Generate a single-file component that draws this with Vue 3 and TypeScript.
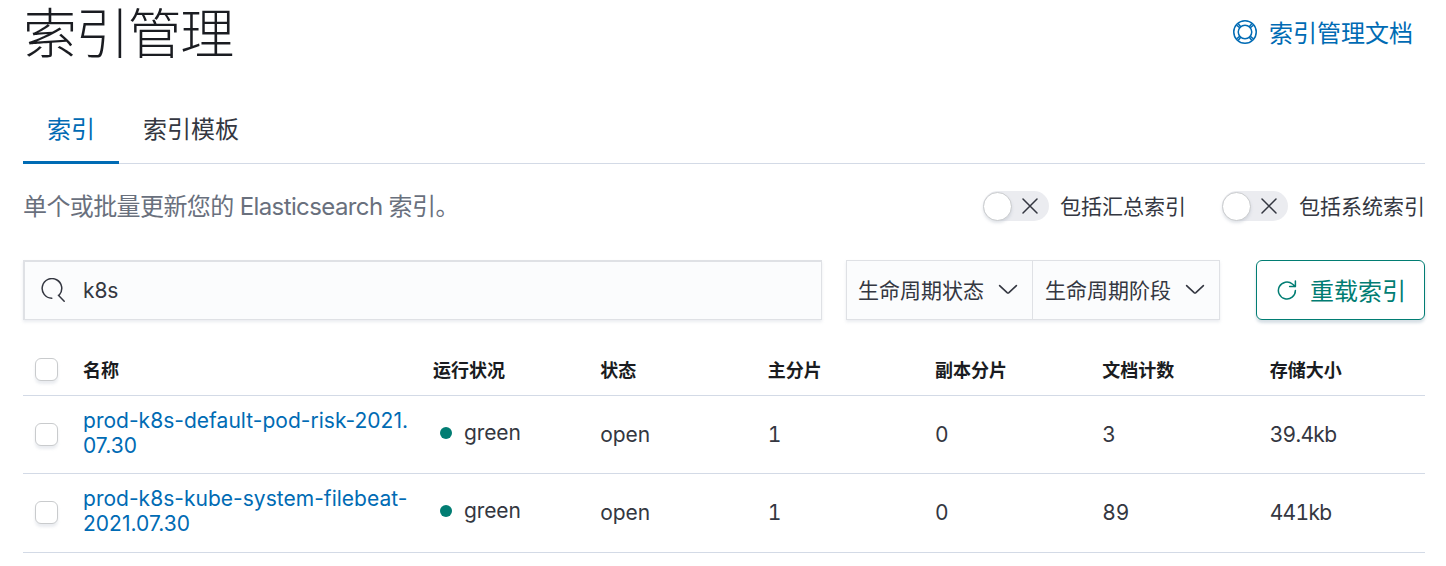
<script setup lang="ts">
import { ref } from 'vue'

interface IndexRow {
  name: string[]
  health: string
  status: string
  primary: number
  replica: number
  docs: number
  size: string
}

const query = ref('k8s')
const tabs = ['索引', '索引模板']
const toggles = ['包括汇总索引', '包括系统索引']
const filters = ['生命周期状态', '生命周期阶段']
const headers = ['运行状况', '状态', '主分片', '副本分片', '文档计数', '存储大小']
const rows: IndexRow[] = [
  { name: ['prod-k8s-default-pod-risk-2021.', '07.30'], health: 'green', status: 'open', primary: 1, replica: 0, docs: 3, size: '39.4kb' },
  { name: ['prod-k8s-kube-system-filebeat-', '2021.07.30'], health: 'green', status: 'open', primary: 1, replica: 0, docs: 89, size: '441kb' },
]
</script>

<template>
  <main class="page">
    <header class="page-header">
      <h1>索引管理</h1>
      <a class="docs-link">
        <svg class="help-icon" width="24" height="24" viewBox="0 0 16 16" fill="none" stroke="currentColor">
          <circle cx="8" cy="8" r="7.5" />
          <circle cx="8" cy="8" r="4.5" />
          <path d="M2.5 3.5 4.6 5.3M3.5 2.5 5.3 4.6M13.5 3.5 11.4 5.3M12.5 2.5 10.7 4.6M2.5 12.5 4.6 10.7M3.5 13.5 5.3 11.4M13.5 12.5 11.4 10.7M12.5 13.5 10.7 11.4" />
        </svg>
        <span>索引管理文档</span>
      </a>
    </header>

    <nav class="tabs">
      <a v-for="(tab, i) in tabs" :key="tab" class="tab" :class="{ selected: i === 0 }">{{ tab }}</a>
    </nav>

    <section class="intro">
      <p><span class="han">单个或批量更新您的</span> <span class="latin">Elasticsearch</span> <span class="han">索引。</span></p>
      <div class="toggles">
        <label v-for="label in toggles" :key="label" class="toggle">
          <span class="track">
            <span class="thumb"></span>
            <svg width="16" height="16" viewBox="0 0 16 16" fill="none" stroke="#343741" stroke-width="1.5" stroke-linecap="round">
              <path d="M1 1 15 15M15 1 1 15" />
            </svg>
          </span>
          <span class="toggle-label">{{ label }}</span>
        </label>
      </div>
    </section>

    <section class="controls">
      <div class="search">
        <svg width="24" height="24" viewBox="0 0 24 24" fill="none" stroke="#343741" stroke-width="1.5" stroke-linecap="round">
          <path d="M10.8 20.2A9.8 9.8 0 1 1 18.3 16.9M17.4 17.3 23.2 23.2" />
        </svg>
        <input v-model="query" type="text" />
      </div>
      <div class="filters">
        <button v-for="filter in filters" :key="filter" class="filter">
          <span>{{ filter }}</span>
          <svg width="20" height="12" viewBox="0 0 20 12" fill="none" stroke="#343741" stroke-width="1.6" stroke-linecap="round" stroke-linejoin="round">
            <path d="M1.6 1.6 9.1 8.6Q10 9.4 10.9 8.6L18.4 1.6" />
          </svg>
        </button>
      </div>
      <button class="reload">
        <svg width="20" height="20" viewBox="0 0 20 20" fill="none" stroke="currentColor" stroke-width="1.5" stroke-linecap="round" stroke-linejoin="round">
          <path d="M18.4 10.5A8.5 8.5 0 1 1 15.4 4Q17 5.2 18 6.6M18.4 1V6.6H12.6" />
        </svg>
        <span>重载索引</span>
      </button>
    </section>

    <table class="indices">
      <colgroup>
        <col class="col-check" />
        <col class="col-name" />
        <col v-for="header in headers" :key="header" />
      </colgroup>
      <thead>
        <tr>
          <th><span class="checkbox"></span></th>
          <th>名称</th>
          <th v-for="header in headers" :key="header">{{ header }}</th>
        </tr>
      </thead>
      <tbody>
        <tr v-for="row in rows" :key="row.name[0]">
          <td><span class="checkbox"></span></td>
          <td><a class="name"><span v-for="line in row.name" :key="line">{{ line }}</span></a></td>
          <td><span class="health"><i class="dot"></i>{{ row.health }}</span></td>
          <td>{{ row.status }}</td>
          <td>{{ row.primary }}</td>
          <td>{{ row.replica }}</td>
          <td>{{ row.docs }}</td>
          <td class="size">{{ row.size }}</td>
        </tr>
      </tbody>
    </table>
  </main>
</template>

<style>
body {
  background: #fff;
  overflow: hidden;
}
</style>

<style scoped>
.page {
  box-sizing: border-box;
  height: 566px;
  padding: 0 21px 0 23px;
  color: #343741;
  font-family: Inter, "Noto Sans CJK SC", sans-serif;
  font-size: 21px;
  letter-spacing: -0.005em;
}
.page-header {
  display: flex;
  justify-content: space-between;
  align-items: flex-start;
  height: 94px;
}
h1 {
  margin: 0;
  color: #1a1c21;
  font-size: 54px;
  font-weight: 300;
  line-height: 70px;
  letter-spacing: -0.03em;
}
.docs-link {
  display: flex;
  align-items: center;
  gap: 12px;
  height: 64px;
  margin-right: 12px;
  color: #006bb4;
  font-size: 24px;
  letter-spacing: 0;
}
.docs-link span {
  padding-bottom: 2px;
}
.help-icon {
  stroke-width: 1;
}
.tabs {
  display: flex;
  height: 69px;
  border-bottom: 1px solid #d3dae6;
}
.tab {
  height: 67px;
  padding: 0 24px;
  font-size: 24px;
  line-height: 71px;
  letter-spacing: 0;
}
.tab.selected {
  color: #006bb4;
  border-bottom: 3px solid #006bb4;
}
.intro {
  display: flex;
  justify-content: space-between;
  align-items: center;
  height: 84px;
}
.intro p {
  margin: 0;
  padding-top: 2px;
  color: #69707d;
  font-size: 24px;
  line-height: 36px;
  word-spacing: -0.6px;
}
.intro .han {
  letter-spacing: -0.6px;
}
.intro .latin {
  letter-spacing: -0.6px;
}
.toggles {
  display: flex;
  gap: 36px;
}
.toggle {
  display: flex;
  align-items: center;
  gap: 11px;
}
.toggle-label {
  padding-bottom: 2px;
  letter-spacing: 0;
}
.track {
  display: flex;
  align-items: center;
  gap: 10px;
  width: 66px;
  height: 30px;
  border-radius: 15px;
  background: #ebecf0;
}
.thumb {
  box-sizing: border-box;
  width: 29px;
  height: 29px;
  border: 1px solid #c9cbcd;
  border-radius: 50%;
  background: #fff;
  box-shadow: 0 2px 3px rgba(152, 162, 179, 0.3);
}
.controls {
  display: flex;
  height: 60px;
  margin-top: 12px;
}
.search {
  box-sizing: border-box;
  display: flex;
  align-items: center;
  gap: 18px;
  width: 799px;
  padding-left: 16px;
  border: 2px solid #dfe1e5;
  border-bottom-width: 1px;
  border-right-width: 1px;
  background: #fbfcfd;
  box-shadow: 0 2px 3px rgba(152, 162, 179, 0.2);
}
.search svg {
  margin-bottom: 2px;
}
.search input {
  flex: 1;
  min-width: 0;
  padding: 0;
  border: 0;
  outline: 0;
  background: transparent;
  color: #343741;
  font: inherit;
  letter-spacing: inherit;
}
.filters {
  box-sizing: border-box;
  display: flex;
  width: 374px;
  margin-left: 24px;
  border: 1px solid #dfe1e5;
  background: #fbfcfd;
  box-shadow: 0 2px 3px rgba(152, 162, 179, 0.2);
}
.filter {
  box-sizing: border-box;
  display: flex;
  flex: 1;
  align-items: center;
  gap: 14px;
  padding: 0 0 0 11px;
  border: 0;
  background: transparent;
  color: #343741;
  font: inherit;
  letter-spacing: 0;
  white-space: nowrap;
}
.filter:first-child {
  flex: 0 0 185px;
}
.filter span,
.reload span {
  padding-bottom: 2px;
}
.filter + .filter {
  padding-left: 12px;
  border-left: 1px solid #dfe1e5;
}
.reload {
  box-sizing: border-box;
  display: flex;
  align-items: center;
  justify-content: center;
  gap: 13px;
  width: 169px;
  margin-left: auto;
  padding: 0 0 0 2px;
  border: 1px solid #017d73;
  border-radius: 6px;
  background: #fff;
  box-shadow: 0 3px 3px rgba(54, 97, 126, 0.2);
  color: #017d73;
  font: inherit;
  font-size: 24px;
  letter-spacing: 0;
}
.indices {
  width: 1402px;
  margin-top: 24px;
  border-collapse: separate;
  border-spacing: 0;
  table-layout: fixed;
}
.col-check {
  width: 48px;
}
.col-name {
  width: 350px;
}
th,
td {
  box-sizing: border-box;
  padding: 0 0 0 12px;
  border-bottom: 1px solid #d3dae6;
  text-align: left;
  vertical-align: middle;
}
th {
  height: 52px;
  color: #1a1c21;
  font-size: 18px;
  font-weight: 700;
  line-height: 27px;
  letter-spacing: 0;
}
th:not(:first-child) {
  padding-top: 1px;
}
td {
  height: 78px;
  line-height: 25px;
  font-variant-numeric: tabular-nums;
}
tr:last-child td {
  height: 79px;
  padding-bottom: 1px;
}
.size {
  letter-spacing: -0.7px;
}
.checkbox {
  box-sizing: border-box;
  display: block;
  width: 23px;
  height: 23px;
  border: 1px solid #c9cbcd;
  border-radius: 6px;
  background: #fff;
  box-shadow: 0 3px 3px rgba(152, 162, 179, 0.2);
}
.name {
  display: flex;
  flex-direction: column;
  padding-bottom: 3px;
  color: #006bb4;
  font-variant-numeric: normal;
  letter-spacing: 0.02px;
  white-space: nowrap;
}
.health {
  display: flex;
  align-items: center;
  gap: 12px;
  padding: 0 0 4px 7px;
}
.dot {
  width: 12px;
  height: 12px;
  border-radius: 50%;
  background: #017d73;
}
</style>
